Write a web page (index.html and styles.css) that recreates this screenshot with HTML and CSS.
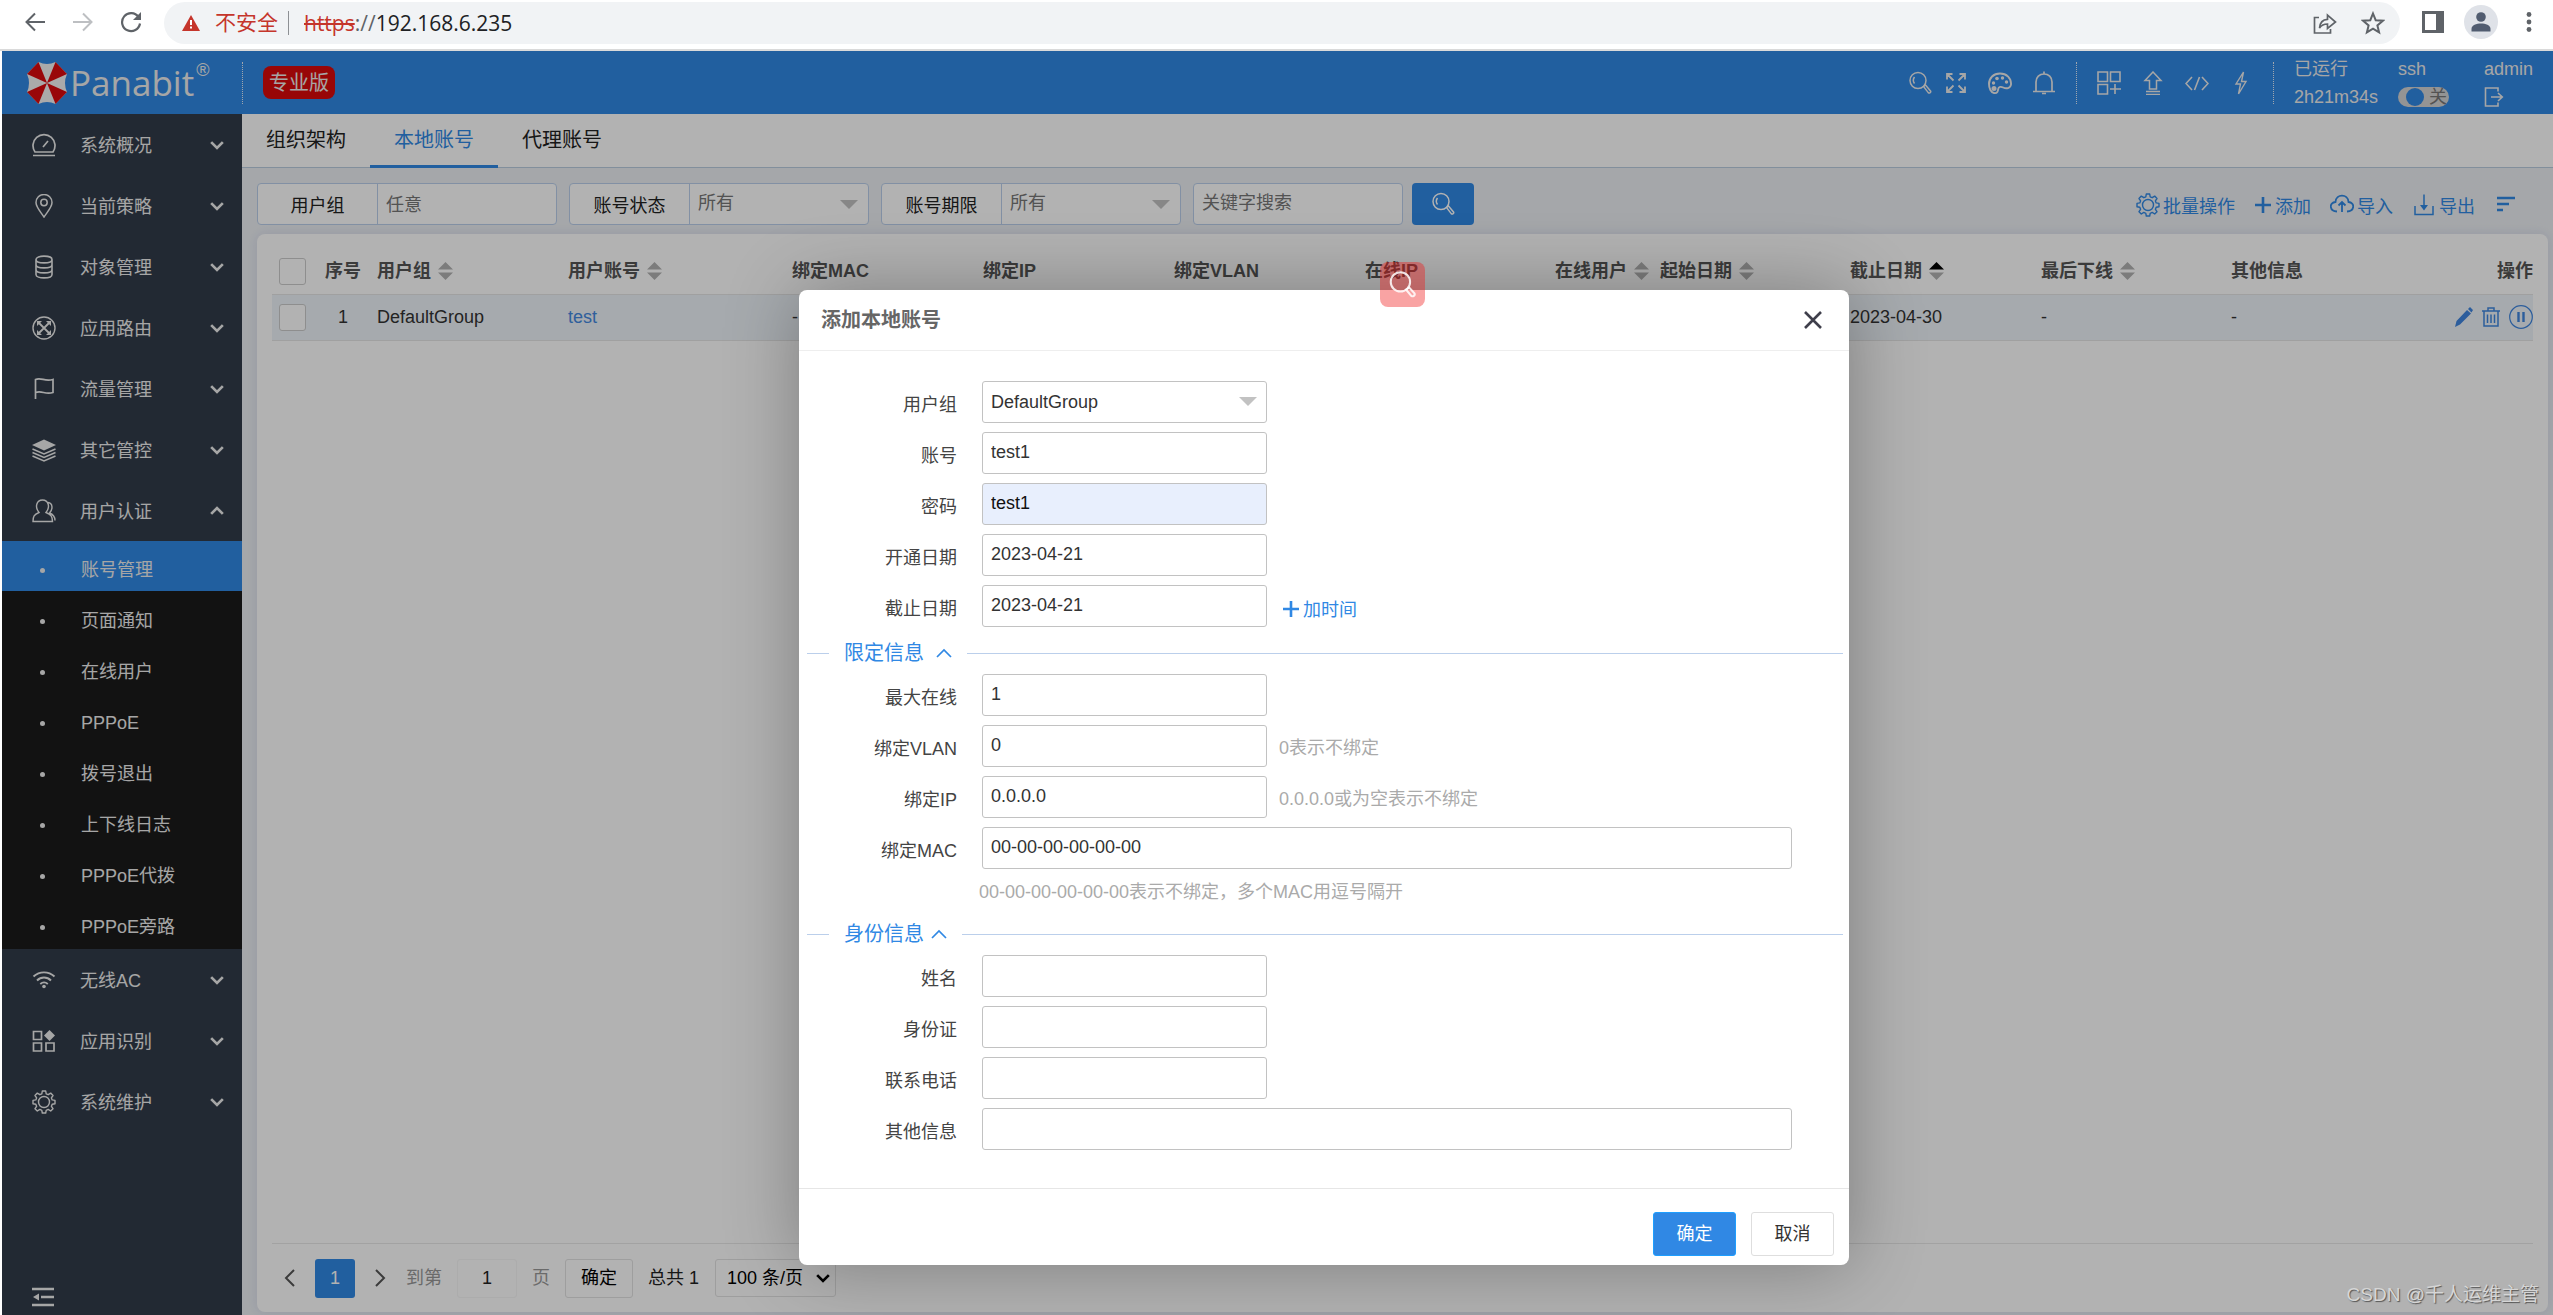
FILE: index.html
```html
<!DOCTYPE html>
<html lang="zh-CN">
<head>
<meta charset="utf-8">
<title>Panabit</title>
<link rel="stylesheet" href="styles.css">
</head>
<body>
<svg class="sprite" aria-hidden="true">
  <symbol id="chev-down" viewBox="0 0 12 12"><path d="M1 3.500l5 5 5-5" fill="none" stroke="currentColor" stroke-width="2.300"/></symbol>
  <symbol id="chev-up" viewBox="0 0 12 12"><path d="M1 8.500l5-5 5 5" fill="none" stroke="currentColor" stroke-width="2.300"/></symbol>
  <symbol id="sort" viewBox="0 0 15 18"><path class="sort-up" d="M0 7.500L7.500 0 15 7.500z"/><path d="M0 10.500L7.500 18 15 10.500z"/></symbol>
  <symbol id="search" viewBox="0 0 24 24"><g fill="none" stroke="currentColor" stroke-width="1.500"><circle cx="10" cy="9.500" r="8"/><path d="M6.500 12.500c-1.500-2-1.500-4.500 0-6.500M15.500 15.500l2-1.500 5 6c.8 1.300-1 2.800-2.300 1.600z"/></g></symbol>
  <symbol id="plus" viewBox="0 0 18 18"><path d="M9 1v16M1 9h16" stroke="currentColor" stroke-width="2.600"/></symbol>
  <symbol id="gear" viewBox="0 0 24 24"><g fill="none" stroke="currentColor" stroke-width="1.400" stroke-linejoin="round"><circle cx="12" cy="12" r="5.500"/><path d="M10.300 1h3.400l.5 2.800 2 .9 2.500-1.600 2.300 2.400-1.600 2.400.8 2 2.800.5v3.300l-2.800.6-.8 2 1.600 2.400-2.300 2.300-2.500-1.600-2 .9-.5 2.700h-3.400l-.5-2.700-2-.9-2.500 1.600L3 18.700l1.600-2.400-.8-2-2.800-.6v-3.300l2.800-.5.8-2L3 5.500l2.300-2.400 2.500 1.600 2-.9z"/></g></symbol>
</svg>

<div class="browser">
  <svg class="nav-icon" viewBox="0 0 22 22"><path d="M21 11H3M11 2.500L2.500 11l8.500 8.500" fill="none" stroke="#5f6368" stroke-width="2"/></svg>
  <svg class="nav-icon" viewBox="0 0 22 22"><path d="M1 11h18M11 2.500l8.500 8.500-8.500 8.500" fill="none" stroke="#bdbfc2" stroke-width="2"/></svg>
  <svg class="nav-icon" viewBox="0 0 22 22"><path d="M18.500 6A9 9 0 1 0 20 12.500" fill="none" stroke="#5f6368" stroke-width="2.200"/><path d="M21 1v8h-8z" fill="#5f6368"/></svg>
  <div class="address">
    <svg width="18" height="16" viewBox="0 0 18 16"><path d="M9 0l9 16H0z" fill="#c5352b"/><path d="M9 5v5M9 11.500v2" stroke="#fff" stroke-width="2"/></svg>
    <span class="insecure">不安全</span>
    <span class="address-rule"></span>
    <span class="url"><s>https</s><i>://</i>192.168.6.235</span>
    <svg class="push" width="24" height="24" viewBox="0 0 24 24"><path d="M6 6.500H1.500V22h16v-4M6.500 17c.5-6 3.500-8.500 8-8.700V4l8 7-8 6.500V13c-4 0-6 1-8 4z" fill="none" stroke="#5f6368" stroke-width="1.700"/></svg>
    <svg width="24" height="24" viewBox="0 0 24 24"><path d="M12 2.500l2.700 6.700 7.200.5-5.500 4.700 1.700 7-6.100-3.800-6.100 3.800 1.700-7L2.100 9.700l7.200-.5z" fill="none" stroke="#5f6368" stroke-width="2"/></svg>
  </div>
  <svg class="panel-icon" width="22" height="22" viewBox="0 0 22 22"><path d="M0 0h22v22H0zM3 3v16h11V3z" fill="#5f6368" fill-rule="evenodd"/></svg>
  <svg class="avatar" width="34" height="34" viewBox="0 0 34 34"><circle cx="17" cy="17" r="17" fill="#dfe2e8"/><circle cx="17" cy="12" r="4.800" fill="#515c70"/><path d="M7.500 26.500v-2.500c0-4 5-5.500 9.500-5.500s9.500 1.500 9.500 5.500v2.500z" fill="#515c70"/></svg>
  <svg width="6" height="22" viewBox="0 0 6 22"><g fill="#5f6368"><circle cx="3" cy="3.500" r="2.400"/><circle cx="3" cy="11" r="2.400"/><circle cx="3" cy="18.500" r="2.400"/></g></svg>
</div>

<div class="app">
  <header class="topbar">
    <div class="brand">
      <svg width="42" height="44" viewBox="0 0 42 44"><path d="M12.500 1h17L41 13v18L29.500 43h-17L1 31V13z" fill="#f4f4f4"/><g fill="#dc0a0e"><path d="M21 22L12.500 1 1 13z"/><path d="M21 22L29.500 1 41 13z"/><path d="M21 22L1 31l11.500 12z"/><path d="M21 22l20 9-11.500 12z"/></g><path d="M12.500 1Q21 5 29.500 1l-1-1h-15zM1 13q4 9 0 18zM41 13q-4 9 0 18zM12.500 43q8.500-4 17 0z" fill="#3088e4"/></svg>
      <span class="brand-name">Panabit</span><sup>®</sup>
    </div>
    <span class="dots"></span>
    <span class="edition">专业版</span>
    <div class="tools">
      <svg class="ic" viewBox="0 0 24 24"><use href="#search"/></svg>
      <svg class="ic tight" viewBox="0 0 24 24"><path d="M3 8.500V3h5.500M3 3l6.500 6.500M15.500 3H21v5.500M21 3l-6.500 6.500M3 15.500V21h5.500M3 21l6.500-6.500M21 15.500V21h-5.500M21 21l-6.500-6.500" fill="none" stroke="currentColor" stroke-width="1.800"/></svg>
      <svg class="ic" viewBox="0 0 24 24"><path d="M12 2.500C5.500 2.500 1 7 1 13c0 4.500 2 8.500 5 9 3.500.6 4-2 4.200-4 .3-2.500 3-2.500 5-1.500 3 1.500 7.300 1 7.800-3C23.500 7 18.500 2.500 12 2.500z" fill="none" stroke="currentColor" stroke-width="1.900"/><g fill="currentColor"><circle cx="5.500" cy="12" r="1.700"/><circle cx="9" cy="7.500" r="1.800"/><circle cx="14.500" cy="7" r="1.700"/><circle cx="18.500" cy="11" r="1.700"/><circle cx="6" cy="17.500" r="2.500"/></g></svg>
      <svg class="ic" viewBox="0 0 24 24"><path d="M1 20.500h22M4 20V11c0-5 3.500-8 8-8s8 3 8 8v9M12 3V.5M10 22.500h4" fill="none" stroke="currentColor" stroke-width="1.700"/></svg>
      <span class="dots"></span>
      <svg class="ic" viewBox="0 0 24 24"><path d="M1 1h9.500v9.500H1zM13.500 1H23v9.500h-9.500zM1 13.500h9.500V23H1zM18 13v10M13 18h11" fill="none" stroke="currentColor" stroke-width="1.600"/></svg>
      <svg class="ic" viewBox="0 0 24 24"><path d="M8.500 18V9.500H4L12 1l8 8.500h-4.500V18zM5 20.500h14M5 23.500h14" fill="none" stroke="currentColor" stroke-width="1.500"/></svg>
      <svg class="ic" viewBox="0 0 24 24"><path d="M7 6l-6 6.500L7 19M17 6l6 6.500-6 6.500M14.500 6l-5 13" fill="none" stroke="currentColor" stroke-width="1.600"/></svg>
      <svg class="ic" viewBox="0 0 24 24"><path d="M14.500 1L7 13h4.500L9.500 23 17 10.500h-4.500z" fill="none" stroke="currentColor" stroke-width="1.400"/></svg>
      <span class="dots"></span>
      <div class="stat"><span>已运行</span><span>2h21m34s</span></div>
      <div class="stat">
        <label for="ssh">ssh</label>
        <span class="switch"><input type="checkbox" id="ssh"><span>关</span></span>
      </div>
      <div class="stat admin"><span>admin</span>
        <svg width="20" height="20" viewBox="0 0 20 20"><path d="M14 4.500V1H1.500v18H14v-3.500M7 10h11M14 6l4.300 4-4.300 4" fill="none" stroke="currentColor" stroke-width="1.600"/></svg>
      </div>
    </div>
  </header>

  <div class="body">
    <nav class="sidebar">
      <a class="item" href="#"><svg class="ic" viewBox="0 0 24 24"><path d="M1 22.500h22M3 19a11 11 0 1 1 18 0zM11 14l5-6" fill="none" stroke="currentColor" stroke-width="1.700"/></svg><span>系统概况</span><svg class="chev"><use href="#chev-down"/></svg></a>
      <a class="item" href="#"><svg class="ic" viewBox="0 0 24 24"><path d="M12 23C8 17 4 13 4 8.500a8 8 0 0 1 16 0C20 13 16 17 12 23z" fill="none" stroke="currentColor" stroke-width="1.500"/><circle cx="12" cy="8.500" r="3.200" fill="none" stroke="currentColor" stroke-width="1.500"/></svg><span>当前策略</span><svg class="chev"><use href="#chev-down"/></svg></a>
      <a class="item" href="#"><svg class="ic" viewBox="0 0 24 24"><path d="M4 4.500C4 0 20 0 20 4.500v15c0 4.500-16 4.500-16 0zM4 4.500C4 9 20 9 20 4.500M4 9.500c0 4.500 16 4.500 16 0M4 14.500c0 4.500 16 4.500 16 0" fill="none" stroke="currentColor" stroke-width="1.600"/></svg><span>对象管理</span><svg class="chev"><use href="#chev-down"/></svg></a>
      <a class="item" href="#"><svg class="ic" viewBox="0 0 24 24"><circle cx="12" cy="12" r="11" fill="none" stroke="currentColor" stroke-width="1.400"/><path d="M6 6l12 12M18 6L6 18" fill="none" stroke="currentColor" stroke-width="1.800"/><path d="M5 5h5l-5 5zM19 5h-5l5 5zM5 19h5l-5-5zM19 19h-5l5-5z" fill="currentColor"/></svg><span>应用路由</span><svg class="chev"><use href="#chev-down"/></svg></a>
      <a class="item" href="#"><svg class="ic" viewBox="0 0 24 24"><path d="M3.500 22V2.500c6-2.500 9 2.500 17.500 0v13c-8 2.500-11-2.500-17.500 0" fill="none" stroke="currentColor" stroke-width="1.700"/></svg><span>流量管理</span><svg class="chev"><use href="#chev-down"/></svg></a>
      <a class="item" href="#"><svg class="ic" viewBox="0 0 24 24"><path d="M12 1.500L24 7l-12 5.500L0 7z" fill="currentColor"/><path d="M.5 11L12 16l11.500-5M.5 14.500l11.500 5 11.500-5M.5 18L12 23l11.500-5" fill="none" stroke="currentColor" stroke-width="1.500"/></svg><span>其它管控</span><svg class="chev"><use href="#chev-down"/></svg></a>
      <a class="item" href="#"><svg class="ic" viewBox="0 0 24 24"><path d="M1 22.500c0-5 1-7 6-9C2.500 8 4.500 1 10.500 1S18.500 8 14 13.500c5 2 6.500 4 6.500 9zM16 3.500c5 .5 5 7 1.500 10.500 4 1.500 5.500 3.500 5.500 7.500" fill="none" stroke="currentColor" stroke-width="1.400"/></svg><span>用户认证</span><svg class="chev"><use href="#chev-up"/></svg></a>
      <div class="submenu">
        <a class="active" href="#">账号管理</a>
        <a href="#">页面通知</a>
        <a href="#">在线用户</a>
        <a href="#">PPPoE</a>
        <a href="#">拨号退出</a>
        <a href="#">上下线日志</a>
        <a href="#">PPPoE代拨</a>
        <a href="#">PPPoE旁路</a>
      </div>
      <a class="item" href="#"><svg class="ic" viewBox="0 0 24 24"><path d="M1.500 8.500c6-5.500 15-5.500 21 0M5 12.500c4-4 10-4 14 0M8.300 16c2.300-2 5.200-2 7.500 0" fill="none" stroke="currentColor" stroke-width="1.900"/><circle cx="12" cy="18.500" r="1.800" fill="currentColor"/></svg><span>无线AC</span><svg class="chev"><use href="#chev-down"/></svg></a>
      <a class="item" href="#"><svg class="ic" viewBox="0 0 24 24"><path d="M1.500 2.500h8v8h-8zM1.500 14h8v8h-8zM14 14h8v8h-8z" fill="none" stroke="currentColor" stroke-width="1.700"/><path d="M17.500 1l5.500 5.500-5.500 5.500L12 6.500z" fill="currentColor"/></svg><span>应用识别</span><svg class="chev"><use href="#chev-down"/></svg></a>
      <a class="item" href="#"><svg class="ic"><use href="#gear"/></svg><span>系统维护</span><svg class="chev"><use href="#chev-down"/></svg></a>
      <svg class="collapse" width="22" height="20" viewBox="0 0 22 20"><path d="M0 2h22M9 10h13M0 18h22" stroke="currentColor" stroke-width="2.600"/><path d="M7 6.500v7L1 10z" fill="currentColor"/></svg>
    </nav>

    <main class="content">
      <nav class="tabs"><a href="#">组织架构</a><a class="active" href="#">本地账号</a><a href="#">代理账号</a></nav>

      <div class="filters">
        <div class="field"><label for="f-group">用户组</label><input id="f-group" type="text" value="任意"></div>
        <div class="field drop"><label for="f-state">账号状态</label><select id="f-state"><option>所有</option></select></div>
        <div class="field drop"><label for="f-term">账号期限</label><select id="f-term"><option>所有</option></select></div>
        <input class="keyword" type="text" placeholder="关键字搜索" aria-label="关键字搜索">
        <button class="find" type="button" aria-label="搜索"><svg class="ic"><use href="#search"/></svg></button>
        <div class="actions">
          <a href="#"><svg class="ic"><use href="#gear"/></svg>批量操作</a>
          <a href="#"><svg class="ic-s"><use href="#plus"/></svg>添加</a>
          <a href="#"><svg class="ic" viewBox="0 0 24 24"><path d="M7 18.500c-8-.5-8-9 -1.500-9.500C6 .5 18 .5 18.500 9c6.500.5 6.500 9-1.500 9.500M12 19V9.500M8.500 12.500L12 9l3.500 3.500" fill="none" stroke="currentColor" stroke-width="1.800"/></svg>导入</a>
          <a href="#"><svg class="ic" viewBox="0 0 24 24"><path d="M3 13v8.500h18V13M12 1.500V16" fill="none" stroke="currentColor" stroke-width="1.500"/><path d="M8 12h8l-4 5.500z" fill="currentColor"/></svg>导出</a>
          <a href="#" aria-label="列设置"><svg class="ic" viewBox="0 0 24 24"><path d="M3 5h18M3 11h12M3 17h6" stroke="currentColor" stroke-width="2.300"/></svg></a>
        </div>
      </div>

      <section class="card">
        <table>
          <colgroup><col class="c-check"><col class="c-no"><col class="c-wide"><col class="c-acct"><col class="c-wide"><col class="c-wide"><col class="c-wide"><col class="c-std"><col class="c-user"><col class="c-std"><col class="c-wide"><col class="c-std"><col><col class="c-ops"></colgroup>
          <thead>
            <tr>
              <th class="check"><input type="checkbox" aria-label="全选"></th>
              <th class="no">序号</th>
              <th>用户组<svg class="sort"><use href="#sort"/></svg></th>
              <th>用户账号<svg class="sort"><use href="#sort"/></svg></th>
              <th>绑定MAC</th><th>绑定IP</th><th>绑定VLAN</th><th>在线IP</th>
              <th>在线用户<svg class="sort"><use href="#sort"/></svg></th>
              <th>起始日期<svg class="sort"><use href="#sort"/></svg></th>
              <th>截止日期<svg class="sort asc"><use href="#sort"/></svg></th>
              <th>最后下线<svg class="sort"><use href="#sort"/></svg></th>
              <th>其他信息</th>
              <th class="ops">操作</th>
            </tr>
          </thead>
          <tbody>
            <tr>
              <td class="check"><input type="checkbox" aria-label="选择 test"></td>
              <td class="no">1</td><td>DefaultGroup</td><td><a href="#">test</a></td>
              <td>-</td><td>-</td><td>-</td><td>-</td><td>-</td><td>2023-04-21</td><td>2023-04-30</td><td>-</td><td>-</td>
              <td class="ops">
                <div class="op-icons">
                  <svg width="18" height="20" viewBox="0 0 18 20"><path d="M0 20l1.500-6L12 3l4 3.500L5 17.500zM13 2l2-2 3 3-1.500 2.500z" fill="currentColor"/></svg>
                  <svg width="18" height="20" viewBox="0 0 18 20"><path d="M0 4h18M6 4V1h6v3M2 4v15h14V4M5.500 7.500V16M9 7.500V16M12.500 7.500V16" fill="none" stroke="currentColor" stroke-width="1.500"/></svg>
                  <svg width="24" height="24" viewBox="0 0 24 24"><circle cx="12" cy="12" r="11.300" fill="none" stroke="currentColor" stroke-width="1.200"/><path d="M9.500 7v10M14.500 7v10" stroke="currentColor" stroke-width="2.400"/></svg>
                </div>
              </td>
            </tr>
          </tbody>
        </table>
        <div class="pager">
          <svg class="arrow" viewBox="0 0 11 18"><path d="M10 1L2 9l8 8" fill="none" stroke="currentColor" stroke-width="2"/></svg>
          <button class="page current" type="button">1</button>
          <svg class="arrow" viewBox="0 0 11 18"><path d="M1 1l8 8-8 8" fill="none" stroke="currentColor" stroke-width="2"/></svg>
          <label for="goto">到第</label>
          <input id="goto" type="text" value="1">
          <span class="muted">页</span>
          <button class="page go" type="button">确定</button>
          <span class="total">总共 1</span>
          <div class="size"><select aria-label="每页条数"><option>100 条/页</option></select><svg><use href="#chev-down"/></svg></div>
        </div>
      </section>
    </main>
  </div>

  <div class="overlay">
    <form class="modal">
      <div class="modal-head"><h2>添加本地账号</h2>
        <button type="button" aria-label="关闭"><svg width="18" height="18" viewBox="0 0 18 18"><path d="M1 1l16 16M17 1L1 17" stroke="#3f3f4b" stroke-width="2.600"/></svg></button></div>
      <div class="modal-body">
        <div class="row"><label for="m-group">用户组</label><div class="pick drop"><select id="m-group"><option>DefaultGroup</option></select></div></div>
        <div class="row"><label for="m-acct">账号</label><input id="m-acct" type="text" value="test1"></div>
        <div class="row"><label for="m-pass">密码</label><input id="m-pass" class="filled" type="text" value="test1"></div>
        <div class="row"><label for="m-from">开通日期</label><input id="m-from" type="text" value="2023-04-21"></div>
        <div class="row"><label for="m-to">截止日期</label><input id="m-to" type="text" value="2023-04-21"><a class="more" href="#"><svg class="ic-s"><use href="#plus"/></svg>加时间</a></div>
        <div class="section"><span>限定信息</span><svg viewBox="0 0 16 10"><path d="M1 9l7-7 7 7" fill="none" stroke="currentColor" stroke-width="1.700"/></svg></div>
        <div class="row"><label for="m-max">最大在线</label><input id="m-max" type="text" value="1"></div>
        <div class="row"><label for="m-vlan">绑定VLAN</label><input id="m-vlan" type="text" value="0"><span class="hint">0表示不绑定</span></div>
        <div class="row"><label for="m-ip">绑定IP</label><input id="m-ip" type="text" value="0.0.0.0"><span class="hint">0.0.0.0或为空表示不绑定</span></div>
        <div class="row"><label for="m-mac">绑定MAC</label><input id="m-mac" class="wide" type="text" value="00-00-00-00-00-00"></div>
        <p class="note">00-00-00-00-00-00表示不绑定，多个MAC用逗号隔开</p>
        <div class="section snug"><span>身份信息</span><svg viewBox="0 0 16 10"><path d="M1 9l7-7 7 7" fill="none" stroke="currentColor" stroke-width="1.700"/></svg></div>
        <div class="row"><label for="m-name">姓名</label><input id="m-name" type="text"></div>
        <div class="row"><label for="m-id">身份证</label><input id="m-id" type="text"></div>
        <div class="row"><label for="m-tel">联系电话</label><input id="m-tel" type="text"></div>
        <div class="row"><label for="m-info">其他信息</label><input id="m-info" class="wide" type="text"></div>
      </div>
      <div class="modal-foot"><button class="ok" type="button">确定</button><button type="button">取消</button></div>
    </form>
  </div>
  <button class="float" type="button" aria-label="查找"><svg viewBox="0 0 26 26"><circle cx="11" cy="10.500" r="9.300" fill="none" stroke="currentColor" stroke-width="2"/><path d="M16.500 18l3-2 5 5.500c1 2-1.500 3.500-3 2.500z" fill="none" stroke="currentColor" stroke-width="2"/></svg></button>
  <span class="watermark">CSDN @千人运维主管</span>
</div>
</body>
</html>
```

FILE: styles.css
```css
:root {
  --blue: #3088e4;
  --line: #bbcfeb;
}
* { box-sizing: border-box; }
body {
  margin: 0;
  min-height: 100vh;
  display: flex;
  flex-direction: column;
  background: #fff;
  color: #333;
  font: 18px/24px "Liberation Sans", "Noto Sans CJK SC", sans-serif;
}
input, select, button { font: inherit; color: inherit; margin: 0; }
input, select { appearance: none; outline: 0; }
a { color: inherit; text-decoration: none; }
.sprite { position: absolute; width: 0; height: 0; }
.ic { width: 24px; height: 24px; flex: none; }
.ic-s { width: 18px; height: 18px; flex: none; }

/* browser toolbar */
.browser {
  display: flex;
  align-items: center;
  height: 51px;
  padding: 0 21px 6px 24px;
  border-bottom: 2px solid #dadada;
}
.nav-icon { width: 22px; height: 22px; margin-right: 26px; flex: none; }
.address {
  flex: 1;
  display: flex;
  align-items: center;
  height: 42px;
  margin: 2px 22px 0 -4px;
  padding: 0 15px 0 18px;
  border-radius: 21px;
  background: #f1f3f5;
}
.insecure { margin-left: 15px; font-size: 21px; color: #c5352b; }
.address-rule { width: 1px; height: 24px; margin: 0 15px 0 10px; background: #8d9094; }
.url { font-family: "Open Sans", sans-serif; font-size: 21px; color: #202124; }
.url s { color: #c5352b; }
.url i { font-style: normal; color: #5f6368; }
.push { margin: 0 24px 0 auto; }
.avatar { margin: 0 28px 0 20px; }

/* application shell */
.app {
  position: relative;
  flex: 1;
  display: flex;
  flex-direction: column;
  margin-left: 2px;
}
.topbar {
  display: flex;
  align-items: center;
  height: 63px;
  padding-right: 20px;
  background: var(--blue);
  color: #eee;
}
.brand { display: flex; align-items: center; width: 240px; padding-left: 24px; }
.brand-name { margin-left: 2px; font: 35px/44px "Open Sans", sans-serif; }
.brand sup { align-self: flex-start; margin-left: 2px; font-size: 18px; line-height: 18px; }
.dots { height: 42px; border-left: 1px dotted #e6eefa; }
.edition {
  margin-left: 20px;
  padding: 1px 6px 0;
  border-radius: 8px;
  background: #da0a0b;
  font-size: 20px;
  line-height: 32px;
}
.tools { display: flex; align-items: center; gap: 20px; margin-left: auto; }
.tools .tight { margin-left: -8px; }
.stat { display: flex; flex-direction: column; gap: 2px; line-height: 26px; }
.admin { margin-left: 15px; }
.admin svg { margin: 3px 0; }
.switch { position: relative; display: flex; align-items: center; height: 26px; }
.switch input { width: 51px; height: 20px; border-radius: 10px; background: #d4d4d4; }
.switch input::before {
  content: "";
  display: block;
  width: 18px;
  height: 18px;
  margin: 1px 8px;
  border-radius: 50%;
  background: var(--blue);
}
.switch span { position: absolute; right: 2px; color: #777; }

.body { flex: 1; display: flex; }
.sidebar {
  flex: none;
  width: 240px;
  display: flex;
  flex-direction: column;
  background: #323c4a;
  color: #eee;
}
.item { display: flex; align-items: center; height: 61px; padding: 0 18px 0 30px; }
.item span { flex: 1; margin: 3px 0 0 24px; }
.chev { width: 14px; height: 14px; }
.submenu { background: #1a1a1a; }
.submenu a { display: flex; align-items: center; height: 50px; margin-bottom: 1px; padding: 8px 0 0 38px; }
.submenu a::before { content: ""; width: 5px; height: 5px; margin-right: 36px; border-radius: 50%; background: #eee; }
.submenu .active { background: var(--blue); }
.collapse { margin: auto 0 8px 30px; }

.content {
  flex: 1;
  min-width: 0;
  display: flex;
  flex-direction: column;
  padding-bottom: 3px;
  background: #edf0f4;
}
.tabs { display: flex; height: 54px; border-bottom: 1px solid #bacde0; background: #fff; }
.tabs a { height: 54px; padding: 0 24px; border-bottom: 3px solid transparent; font-size: 20px; line-height: 52px; color: #222; }
.tabs .active { border-color: var(--blue); color: var(--blue); }

.filters { display: flex; gap: 12px; padding: 15px 35px 9px 15px; }
.field { display: flex; width: 300px; height: 42px; border: 1px solid var(--line); border-radius: 4px; background: #fff; }
.field label { width: 120px; padding-top: 2px; border-right: 1px solid var(--line); text-align: center; line-height: 40px; color: #222; }
.field input, .field select { flex: 1; min-width: 0; padding: 2px 8px 0; border: 0; background: none; color: #777; }
.field select { padding: 0 8px 2px; }
.drop { position: relative; }
.drop::after {
  content: "";
  position: absolute;
  right: 10px;
  top: 16px;
  border: solid transparent;
  border-width: 9px 9px 0;
  border-top-color: #c2c2c2;
}
.keyword { width: 210px; height: 42px; padding: 0 8px 1px; border: 1px solid var(--line); border-radius: 4px; background: #fff; }
.keyword::placeholder { color: #777; }
.find { width: 62px; height: 42px; margin-left: -3px; padding: 0; border: 0; border-radius: 4px; background: var(--blue); color: #fff; }
.find svg { display: block; margin: auto; }
.actions { display: flex; align-items: center; gap: 19px; margin-left: auto; color: var(--blue); }
.actions a { display: flex; align-items: center; gap: 3px; padding-top: 6px; }
.actions svg { margin-bottom: 5px; }

.card {
  flex: 1;
  display: flex;
  flex-direction: column;
  margin: 0 5px 0 15px;
  padding: 15px 15px 0;
  border-radius: 8px;
  background: #fff;
  box-shadow: 0 0 12px rgba(120, 130, 200, .2);
}
table { width: 100%; table-layout: fixed; border-collapse: collapse; }
.c-check { width: 42px; }
.c-no { width: 58px; }
.c-std { width: 190px; }
.c-wide { width: 191px; }
.c-acct { width: 224px; }
.c-user { width: 105px; }
.c-ops { width: 96px; }
th, td { padding: 0 5px; text-align: left; white-space: nowrap; border-bottom: 1px solid #e6e6e6; }
th { height: 45px; color: #555; }
td { height: 46px; background: #eef4f9; }
td a { color: #4488e0; }
.check { padding: 0 7px; }
.no { text-align: center; }
.check input { display: block; width: 27px; height: 27px; border: 1px solid #ccc; border-radius: 3px; background: #fff; }
.sort { width: 15px; height: 18px; margin-left: 7px; vertical-align: -3px; fill: #b2b2b2; }
.sort.asc { --up: #000; }
.sort-up { fill: var(--up, #b2b2b2); }
.ops { padding: 0; text-align: right; }
.op-icons { display: flex; align-items: center; justify-content: flex-end; gap: 9px; color: #3f86e0; }

.pager { display: flex; align-items: center; height: 69px; margin-top: auto; border-top: 1px solid #e9e9e9; padding: 0 0 0 12px; color: #222; }
.arrow { width: 11px; height: 18px; color: #555; }
.page { height: 39px; border: 1px solid #e2e2e2; border-radius: 3px; background: #fff; }
.current { width: 40px; margin: 0 20px; border: 0; background: var(--blue); color: #fff; }
.pager label, .muted { color: #999; }
.pager label { margin-left: 20px; }
#goto { width: 60px; height: 39px; margin: 0 15px; border: 1px solid #f6f6f6; border-radius: 3px; text-align: center; }
.go { width: 68px; margin: 0 15px; padding: 0; color: #000; }
.size { position: relative; margin-left: 16px; color: #000; }
.size select { width: 121px; height: 38px; padding: 0 11px; border: 1px solid #e2e2e2; border-radius: 3px; background: #fff; }
.size svg { position: absolute; right: 6px; top: 12px; width: 14px; height: 14px; }

/* dialog */
.overlay {
  position: absolute;
  inset: 0;
  display: flex;
  justify-content: center;
  align-items: flex-start;
  padding: 239px 0 0 93px;
  background: rgba(0, 0, 0, .3);
}
.modal { width: 1050px; border-radius: 8px; background: #fff; box-shadow: 1px 1px 75px rgba(0, 0, 0, .3); }
.modal-head { display: flex; align-items: center; justify-content: space-between; height: 61px; padding: 0 27px 0 22px; border-bottom: 1px solid #eee; }
.modal-head h2 { margin: 0; font-size: 20px; color: #666; }
.modal-head button { display: flex; padding: 0; border: 0; background: none; }
.modal-body { padding: 30px 6px 29px 8px; }
.row { display: flex; align-items: center; height: 42px; margin-bottom: 9px; }
.row label { width: 150px; margin-right: 25px; padding-top: 5px; text-align: right; color: #444; }
.row input, .row select { width: 285px; height: 42px; padding: 0 8px 1px; border: 1px solid #c2c2c2; border-radius: 3px; background: #fff; }
.row .filled { background: #e8effd; color: #111; }
.row .wide { width: 810px; }
.more { display: flex; align-items: center; gap: 3px; margin-left: 15px; padding-top: 8px; color: var(--blue); }
.more svg { margin-bottom: 3px; }
.hint { margin: 3px 0 0 12px; color: #aaa; }
.note { margin: 0 0 20px 172px; padding-top: 2px; color: #aaa; }
.section { display: flex; align-items: center; gap: 12px; height: 20px; margin: 16px 0 11px; font-size: 20px; color: var(--blue); }
.section::before { content: ""; width: 22px; margin-right: 3px; border-top: 1px solid var(--line); }
.section::after { content: ""; flex: 1; margin-left: 3px; border-top: 1px solid var(--line); }
.section svg { width: 16px; height: 10px; }
.snug span { margin-right: -5px; }
.modal-foot { display: flex; justify-content: flex-end; gap: 15px; padding: 23px 15px 9px; border-top: 1px solid #e6e6e6; }
.modal-foot button { width: 83px; height: 44px; padding: 0; border: 1px solid #dedede; border-radius: 3px; background: #fff; }
.modal-foot .ok { border-color: #1e9fff; background: var(--blue); color: #fff; }

.float {
  position: absolute;
  left: 54%;
  top: 211px;
  width: 45px;
  height: 45px;
  padding: 9px;
  border: 0;
  border-radius: 8px;
  background: rgba(240, 25, 25, .4);
  color: rgba(255, 255, 255, .85);
}
.float svg { display: block; width: 27px; height: 27px; }
.watermark {
  position: absolute;
  right: 14px;
  bottom: 8px;
  font-size: 19px;
  color: #d6d6d6;
  text-shadow: 1px 1px 1px #555;
}
```
